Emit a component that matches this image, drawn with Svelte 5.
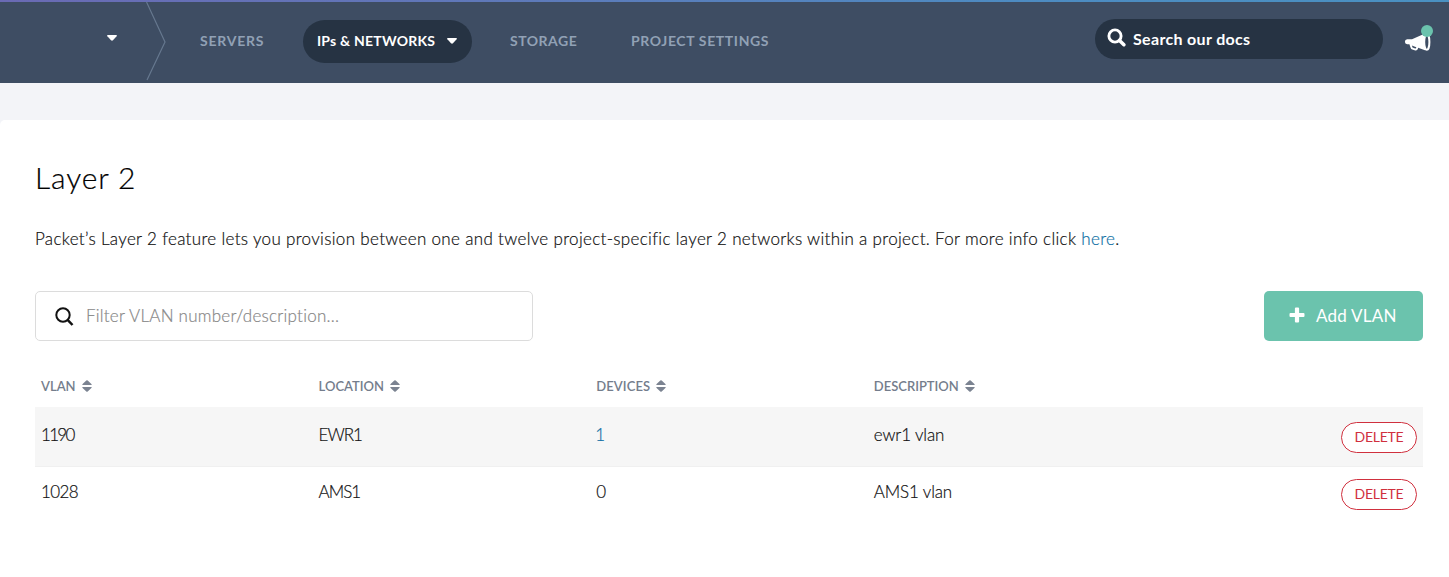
<script>
  const columns = [
    { label: 'VLAN', kind: 'c-vlan' },
    { label: 'LOCATION', kind: 'c-location' },
    { label: 'DEVICES', kind: 'c-devices' },
    { label: 'DESCRIPTION', kind: 'c-description' },
  ];
  const vlans = [
    { id: '1190', location: 'EWR1', devices: 1, description: 'ewr1 vlan' },
    { id: '1028', location: 'AMS1', devices: 0, description: 'AMS1 vlan' },
  ];
</script>

<header class="topbar">
  <div class="project">
    <svg class="caret" width="10" height="6" viewBox="0 0 10 6"><path d="M.8 0h8.400q1.200.2.4 1.200L6 5.200q-1 .9-2 0L.4 1.200Q-.4.2.8 0z" fill="#fff" /></svg>
  </div>
  <svg class="divider" width="22" height="81" viewBox="0 0 22 81"><path d="M.5 0L19 40L1 78" fill="none" stroke="#66788f" stroke-width="1.200" /></svg>
  <nav>
    <a class="item servers" href="#servers">SERVERS</a>
    <a class="item active" href="#networks">
      <span>IPs &amp; NETWORKS</span>
      <svg class="caret" width="10" height="6" viewBox="0 0 10 6"><path d="M.8 0h8.400q1.200.2.4 1.200L6 5.200q-1 .9-2 0L.4 1.200Q-.4.2.8 0z" fill="#fff" /></svg>
    </a>
    <a class="item storage" href="#storage">STORAGE</a>
    <a class="item settings" href="#settings">PROJECT SETTINGS</a>
  </nav>
  <div class="docs">
    <svg width="20" height="20" viewBox="0 0 20 20"><circle cx="8" cy="8" r="6.100" fill="none" stroke="#fff" stroke-width="2.900" /><path d="M12.500 12.500L16.900 16.700" stroke="#fff" stroke-width="3.600" stroke-linecap="round" /></svg>
    <span>Search our docs</span>
  </div>
  <svg class="news" width="30" height="28" viewBox="0 0 30 28">
    <path d="M21 8.500L8 14.300H3.200Q.9 14.400.9 16.700T3.200 19.200H5.400L6.600 22.800Q6.900 24.200 8.300 24.600L11.300 25.500Q13.300 25.900 13.900 23.800L14.200 22.700L21 25.200Z" fill="#fff" />
    <path d="M7.900 20.500L8.500 22.600L11.200 23.500Q12.100 23.700 12.300 22.200Z" fill="#3e4d63" />
    <ellipse cx="22.800" cy="16.900" rx="2.600" ry="7.900" fill="#3e4d63" stroke="#fff" stroke-width="2" />
    <circle cx="23" cy="6" r="6" fill="#6bc3ad" />
  </svg>
</header>

<main>
  <h1>Layer 2</h1>
  <p>Packet’s Layer 2 feature lets you provision between one and twelve project-specific layer 2 networks within a project. For more info click <a href="#here">here</a>.</p>

  <div class="tools">
    <label class="filter">
      <svg width="20" height="20" viewBox="0 0 20 20"><circle cx="8" cy="8" r="6.700" fill="none" stroke="#111" stroke-width="2" /><path d="M12.600 12.800L17.500 18" stroke="#111" stroke-width="2.500" /></svg>
      <input type="text" placeholder="Filter VLAN number/description..." />
    </label>
    <button class="add">
      <svg width="16" height="16" viewBox="0 0 16 16"><path d="M6.900.5h2.200q1 0 1 1v4.400H14.500q1 0 1 1v2.200q0 1-1 1h-4.400V14.500q0 1-1 1H6.900q-1 0-1-1v-4.400H1.500q-1 0-1-1V6.900q0-1 1-1h4.400V1.500q0-1 1-1z" fill="#fff" /></svg>
      <span>Add VLAN</span>
    </button>
  </div>

  <div class="table">
    <div class="row head">
      {#each columns as col}
        <div class={col.kind}>
          <span>{col.label}</span>
          <svg width="10" height="12" viewBox="0 0 10 12"><path d="M.6 5Q0 4.600.6 4L4.300.5Q5-.1 5.700.5L9.400 4Q10 4.600 9.400 5ZM.6 7Q0 7.400.6 8L4.300 11.500Q5 12.100 5.700 11.500L9.400 8Q10 7.400 9.400 7Z" fill="#7b8391" /></svg>
        </div>
      {/each}
    </div>
    {#each vlans as vlan}
      <div class="row body">
        <div class="num">{vlan.id}</div>
        <div class="loc">{vlan.location}</div>
        <div class="dev">{#if vlan.devices}<a href="#devices">{vlan.devices}</a>{:else}{vlan.devices}{/if}</div>
        <div class="desc">{vlan.description}</div>
        <button class="delete">DELETE</button>
      </div>
    {/each}
  </div>
</main>

<style>
  :global(body) {
    background: #f3f4f8;
    font-family: Lato, 'Liberation Sans', sans-serif;
  }
  :global(*) { box-sizing: border-box; }
  a { color: #0f6fa5; text-decoration: none; }
  button { font-family: inherit; cursor: pointer; }
  svg { flex: none; display: block; }
  .topbar {
    display: flex;
    height: 83px;
    padding-top: 2px;
    background:
      linear-gradient(90deg, #6a6ab4, #5f78b9 33%, #4d8bc1 70%, #4a91c2) top / 100% 2px no-repeat,
      #3e4d63;
  }
  .project { width: 146px; padding: 33px 0 0 107px; }
  nav { display: flex; align-items: flex-start; padding-top: 18px; margin-left: 32px; }
  .item {
    display: flex;
    align-items: center;
    height: 43px;
    padding-bottom: 2px;
    white-space: nowrap;
    font-size: 14px;
    font-weight: 700;
    letter-spacing: .62px;
    color: #91a1b5;
  }
  .servers { width: 103px; letter-spacing: .75px; }
  .active {
    width: 169px;
    padding: 0 15px 2px 14px;
    justify-content: space-between;
    border-radius: 22px;
    background: #263343;
    color: #fff;
    letter-spacing: .22px;
  }
  .storage { margin-left: 38px; width: 121px; letter-spacing: .5px; }
  .docs {
    display: flex;
    align-items: center;
    width: 288px;
    height: 40px;
    margin: 17px 21px 0 auto;
    padding: 0 0 2px 12px;
    border-radius: 20px;
    background: #263343;
    color: #fff;
    font-size: 16px;
    font-weight: 700;
    letter-spacing: .33px;
  }
  .docs svg { margin: 0 6px 0 0; }
  .news { margin: 23px 15px 0 0; }
  main {
    height: 457px;
    margin-top: 37px;
    padding: 37px 26px 0 35px;
    background: #fff;
    border-radius: 5px 0 0 0;
    color: #111;
  }
  h1 { margin: 0; font-size: 30px; line-height: 40px; font-weight: 300; letter-spacing: .85px; color: #000; -webkit-text-stroke: .2px; }
  p { margin: 30px 0 0; font-size: 17px; line-height: 24px; font-weight: 300; letter-spacing: .33px; white-space: nowrap; -webkit-text-stroke: .2px; }
  .tools { display: flex; justify-content: space-between; margin-top: 40px; height: 50px; }
  .filter {
    display: flex;
    align-items: center;
    width: 498px;
    padding-left: 19px;
    border: 1px solid #dcdcdc;
    border-radius: 5px;
  }
  .filter svg { margin: 1px 11px 0 0; }
  input {
    flex: 1;
    border: 0;
    padding: 0 0 1px;
    outline: 0;
    background: none;
    font: 300 17px Lato, 'Liberation Sans', sans-serif;
    letter-spacing: .24px;
    -webkit-text-stroke: .2px;
  }
  input::placeholder { color: #888; }
  .add {
    display: flex;
    align-items: center;
    width: 159px;
    padding: 0 0 1px 25px;
    border: 0;
    border-radius: 5px;
    background: #6bc3ad;
    color: #fff;
    font-size: 17px;
    letter-spacing: .25px;
  }
  .add svg { margin: -1px 11px 0 0; }
  .table { margin-top: 26px; }
  .row { display: grid; grid-template-columns: repeat(4, 277.6px) 1fr; padding: 0 6px; }
  .head { height: 40px; font-size: 13px; line-height: 38px; color: #747d8c; font-weight: 600; }
  .head div { display: flex; align-items: center; gap: 6px; padding-bottom: 4px; }
  .c-devices { letter-spacing: .1px; }
  .body { height: 57px; font-size: 17px; line-height: 56px; font-weight: 300; -webkit-text-stroke: .2px; }
  .body:nth-child(2) { height: 60px; margin-bottom: -3px; background: #f6f6f6; border-bottom: 1px solid #f0f0f0; }
  .num { letter-spacing: -.6px; }
  .body:nth-child(2) .num { letter-spacing: -1.700px; }
  .loc { letter-spacing: -1px; }
  .desc { letter-spacing: -.15px; }
  .dev a { margin-left: -1px; }
  .delete {
    justify-self: end;
    width: 76px;
    height: 31px;
    margin-top: 15px;
    padding: 0 0 2px;
    border: 1px solid #d0303e;
    border-radius: 16px;
    background: #fff;
    color: #d0303e;
    font-size: 14px;
    letter-spacing: -.25px;
    -webkit-text-stroke: 0;
  }
</style>
